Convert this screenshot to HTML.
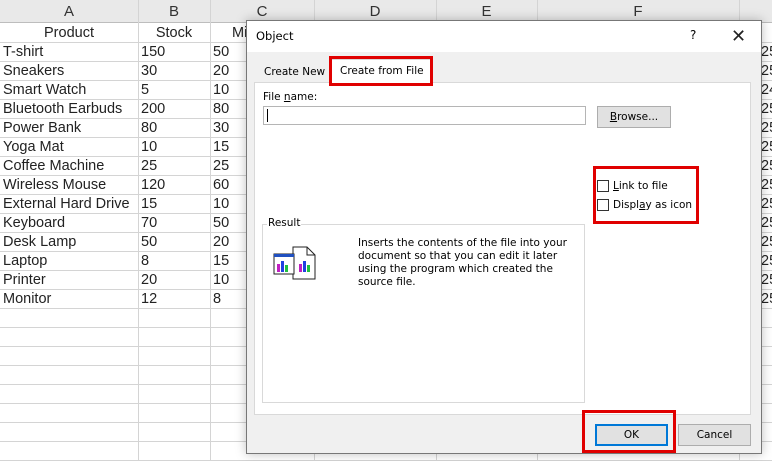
<!DOCTYPE html>
<html><head><meta charset="utf-8"><style>
*{margin:0;padding:0;box-sizing:border-box}
body{width:772px;height:461px;overflow:hidden;background:#fff;font-family:"Liberation Sans",sans-serif;position:relative}
.hdr{position:absolute;left:0;top:0;width:772px;height:23px;background:#e9e9e9;border-bottom:1px solid #bdbdbd}
.hl{position:absolute;top:0;height:23px;font-size:15px;color:#333;text-align:center;line-height:24px}
.vl{position:absolute;top:0;width:1px;height:461px;background:#d4d4d4}
.hz{position:absolute;left:0;width:772px;height:1px;background:#d4d4d4}
.c{position:absolute;font-size:14.5px;color:#222;line-height:19px;white-space:nowrap}
.dlg{position:absolute;left:246px;top:20px;width:516px;height:434px;background:#f0f0f0;border:1px solid #777;box-shadow:0 0 10px rgba(0,0,0,.25)}
.ui{font-family:"DejaVu Sans","Liberation Sans",sans-serif;font-size:10.5px;color:#000}
.red{position:absolute;border:3px solid #e00000}
.btn{position:absolute;background:#e1e1e1;border:1px solid #adadad;text-align:center;line-height:20px}
.cb{position:absolute;width:12px;height:12px;border:1px solid #333;background:#fff}
</style></head><body>
<div class="hdr"></div>
<div class="hl" style="left:0;width:138px">A</div>
<div class="hl" style="left:138px;width:72px">B</div>
<div class="hl" style="left:210px;width:104px">C</div>
<div class="hl" style="left:314px;width:122px">D</div>
<div class="hl" style="left:436px;width:101px">E</div>
<div class="hl" style="left:537px;width:202px">F</div>
<div class="vl" style="left:138px"></div><div class="vl" style="left:210px"></div><div class="vl" style="left:314px"></div><div class="vl" style="left:436px"></div><div class="vl" style="left:537px"></div><div class="vl" style="left:739px"></div>
<div class="hz" style="top:42px"></div><div class="hz" style="top:61px"></div><div class="hz" style="top:80px"></div><div class="hz" style="top:99px"></div><div class="hz" style="top:118px"></div><div class="hz" style="top:137px"></div><div class="hz" style="top:156px"></div><div class="hz" style="top:175px"></div><div class="hz" style="top:194px"></div><div class="hz" style="top:213px"></div><div class="hz" style="top:232px"></div><div class="hz" style="top:251px"></div><div class="hz" style="top:270px"></div><div class="hz" style="top:289px"></div><div class="hz" style="top:308px"></div><div class="hz" style="top:327px"></div><div class="hz" style="top:346px"></div><div class="hz" style="top:365px"></div><div class="hz" style="top:384px"></div><div class="hz" style="top:403px"></div><div class="hz" style="top:422px"></div><div class="hz" style="top:441px"></div><div class="hz" style="top:460px"></div>
<div class="c" style="left:0;width:138px;text-align:center;top:24px">Product</div>
<div class="c" style="left:138px;width:72px;text-align:center;top:24px">Stock</div>
<div class="c" style="left:232px;top:24px">Mi</div>
<div class="c" style="left:3px;top:43px;line-height:19px">T-shirt<br>Sneakers<br>Smart Watch<br>Bluetooth Earbuds<br>Power Bank<br>Yoga Mat<br>Coffee Machine<br>Wireless Mouse<br>External Hard Drive<br>Keyboard<br>Desk Lamp<br>Laptop<br>Printer<br>Monitor</div>
<div class="c" style="left:141px;top:43px">150<br>30<br>5<br>200<br>80<br>10<br>25<br>120<br>15<br>70<br>50<br>8<br>20<br>12</div>
<div class="c" style="left:213px;top:43px">50<br>20<br>10<br>80<br>30<br>15<br>25<br>60<br>10<br>50<br>20<br>15<br>10<br>8</div>
<div class="c" style="left:761px;top:43px">25<br>25<br>24<br>25<br>25<br>25<br>25<br>25<br>25<br>25<br>25<br>25<br>25<br>25</div>

<div class="dlg">
 <div style="position:absolute;left:0;top:0;width:514px;height:31px;background:#fff"></div>
 <div class="ui" style="position:absolute;left:9px;top:8px;font-size:11.5px">Object</div>
 <div class="ui" style="position:absolute;left:443px;top:7px;font-size:12px">?</div>
 <div style="position:absolute;left:484px;top:5px;font-size:18px;color:#222;font-family:'DejaVu Sans',sans-serif;font-weight:200">✕</div>
 <div style="position:absolute;left:7px;top:61px;width:497px;height:333px;background:#fff;border:1px solid #d9d9d9"></div>
 <div class="ui" style="position:absolute;left:17px;top:45px">Create New</div>
 <div style="position:absolute;left:84px;top:38px;width:101px;height:25px;background:#fff;border:1px solid #d9d9d9;border-bottom:none"></div>
 <div class="ui" style="position:absolute;left:93px;top:44px">Create from File</div>
 <div class="red" style="left:82px;top:35px;width:104px;height:30px"></div>
 <div class="ui" style="position:absolute;left:16px;top:70px">File <u>n</u>ame:</div>
 <div style="position:absolute;left:16px;top:85px;width:323px;height:19px;border:1px solid #b5b5b5;background:#fff"><div style="position:absolute;left:3px;top:2px;width:1px;height:13px;background:#000"></div></div>
 <div class="btn ui" style="left:350px;top:85px;width:74px;height:22px"><u>B</u>rowse...</div>
 <div class="red" style="left:346px;top:145px;width:106px;height:58px"></div>
 <div class="cb" style="left:350px;top:159px"></div>
 <div class="ui" style="position:absolute;left:366px;top:159px"><u>L</u>ink to file</div>
 <div class="cb" style="left:350px;top:178px"></div>
 <div class="ui" style="position:absolute;left:366px;top:178px">Displ<u>a</u>y as icon</div>
 <div style="position:absolute;left:15px;top:203px;width:323px;height:179px;border:1px solid #d9d9d9"></div>
 <div class="ui" style="position:absolute;left:20px;top:196px;background:#fff;padding:0 1px">Result</div>
 <svg style="position:absolute;left:26px;top:225px" width="45" height="35" viewBox="0 0 45 35">
  <path d="M20 1h14l8 8v24H20z" fill="#fff" stroke="#222"/>
  <path d="M34 1v8h8" fill="none" stroke="#222"/>
  <rect x="1" y="8" width="20" height="20" fill="#fff" stroke="#222"/>
  <rect x="1" y="8" width="20" height="3" fill="#2050c0"/>
  <rect x="4" y="18" width="3" height="8" fill="#c020c0"/><rect x="8" y="15" width="3" height="11" fill="#2040e0"/><rect x="12" y="19" width="3" height="7" fill="#20c040"/>
  <rect x="26" y="18" width="3" height="8" fill="#c020c0"/><rect x="30" y="15" width="3" height="11" fill="#2040e0"/><rect x="34" y="19" width="3" height="7" fill="#20c040"/>
 </svg>
 <div class="ui" style="position:absolute;left:111px;top:216px;line-height:13px;width:220px">Inserts the contents of the file into your document so that you can edit it later using the program which created the source file.</div>
 <div class="red" style="left:335px;top:389px;width:94px;height:43px"></div>
 <div class="btn ui" style="left:348px;top:403px;width:73px;height:22px;border:2px solid #0078d7;line-height:18px">OK</div>
 <div class="btn ui" style="left:431px;top:403px;width:73px;height:22px">Cancel</div>
</div>
</body></html>
